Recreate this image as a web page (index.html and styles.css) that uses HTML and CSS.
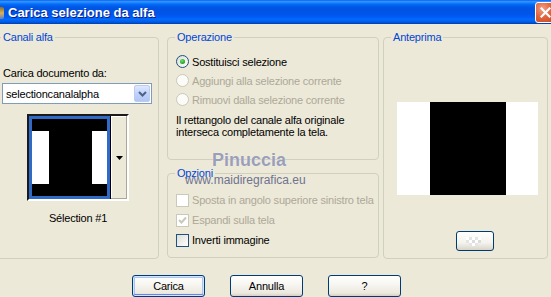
FILE: index.html
```html
<!DOCTYPE html>
<html lang="it">
<head>
<meta charset="utf-8">
<title>Carica selezione da alfa</title>
<link rel="stylesheet" href="styles.css">
</head>
<body>
<div class="window">
  <div class="titlebar">
    <span class="app-icon"></span>
    <span class="title">Carica selezione da alfa</span>
    <span class="close">
      <svg width="11" height="11" viewBox="0 0 11 11"><path d="M1.5 1.5 L9.5 9.5 M9.5 1.5 L1.5 9.5" stroke="#fff" stroke-width="2.2" stroke-linecap="square"/></svg>
    </span>
  </div>
  <div class="content">
    <div class="panels">
      <fieldset class="group group-channels">
        <legend>Canali alfa</legend>
        <div class="channels-body">
          <div class="field-label">Carica documento da:</div>
          <div class="combo">
            <span class="combo-text">selectioncanalalpha</span>
            <span class="combo-btn">
              <svg width="9" height="6" viewBox="0 0 9 6"><path d="M1 1 L4.5 4.5 L8 1" fill="none" stroke="#4d6185" stroke-width="2"/></svg>
            </span>
          </div>
          <div class="thumb-col">
            <div class="thumb-frame">
              <div class="thumb-sel">
                <div class="thumb-img">
                  <span class="t-white"></span><span class="t-black"></span><span class="t-white t-right"></span>
                </div>
              </div>
              <div class="thumb-btn">
                <svg width="7" height="4" viewBox="0 0 7 4"><path d="M0 0 H7 L3.5 4 Z" fill="#000"/></svg>
              </div>
            </div>
            <div class="thumb-caption">Sélection #1</div>
          </div>
        </div>
      </fieldset>

      <div class="middle">
        <fieldset class="group group-op">
          <legend>Operazione</legend>
          <div class="op-body">
            <div class="opt-row">
              <span class="radio checked"><span class="dot"></span></span>
              <span>Sostituisci selezione</span>
            </div>
            <div class="opt-row disabled">
              <span class="radio"></span>
              <span>Aggiungi alla selezione corrente</span>
            </div>
            <div class="opt-row disabled">
              <span class="radio"></span>
              <span>Rimuovi dalla selezione corrente</span>
            </div>
            <p class="note">Il rettangolo del canale alfa originale<br>interseca completamente la tela.</p>
          </div>
        </fieldset>
        <fieldset class="group group-opts">
          <legend>Opzioni</legend>
          <div class="opts-body">
            <div class="opt-row disabled">
              <span class="check"></span>
              <span>Sposta in angolo superiore sinistro tela</span>
            </div>
            <div class="opt-row disabled">
              <span class="check">
                <svg width="9" height="9" viewBox="0 0 9 9"><path d="M1 4 L3.5 6.5 L8 1.5" fill="none" stroke="#cac8bb" stroke-width="2"/></svg>
              </span>
              <span>Espandi sulla tela</span>
            </div>
            <div class="opt-row">
              <span class="check enabled"></span>
              <span>Inverti immagine</span>
            </div>
          </div>
        </fieldset>
      </div>

      <fieldset class="group group-preview">
        <legend>Anteprima</legend>
        <div class="preview-body">
          <div class="preview-img"><span class="p-black"></span></div>
          <div class="preview-btn">
            <svg width="18" height="9" viewBox="0 0 18 9">
              <rect x="0" y="0" width="3" height="3" fill="#fff"/>
              <rect x="3" y="0" width="3" height="3" fill="#e4e4e4"/>
              <rect x="6" y="0" width="3" height="3" fill="#fff"/>
              <rect x="9" y="0" width="3" height="3" fill="#e4e4e4"/>
              <rect x="12" y="0" width="3" height="3" fill="#fff"/>
              <rect x="0" y="3" width="3" height="3" fill="#e4e4e4"/>
              <rect x="3" y="3" width="3" height="3" fill="#fff"/>
              <rect x="6" y="3" width="3" height="3" fill="#dcdcdc"/>
              <rect x="9" y="3" width="3" height="3" fill="#fff"/>
              <rect x="12" y="3" width="3" height="3" fill="#dcdcdc"/>
              <rect x="3" y="6" width="3" height="3" fill="#e4e4e4"/>
              <rect x="6" y="6" width="3" height="3" fill="#fff"/>
              <rect x="9" y="6" width="3" height="3" fill="#e4e4e4"/>
            </svg>
          </div>
        </div>
      </fieldset>
    </div>

    <div class="buttons">
      <button class="btn default">Carica</button>
      <button class="btn">Annulla</button>
      <button class="btn">?</button>
    </div>
  </div>

  <div class="watermark">
    <div class="wm-name">Pinuccia</div>
    <div class="wm-url">www.maidiregrafica.eu</div>
  </div>
</div>
</body>
</html>
```

FILE: styles.css
```css
html, body {
  margin: 0;
  padding: 0;
}

body {
  width: 551px;
  height: 297px;
  overflow: hidden;
  background: #ece9d8;
  font-family: "Liberation Sans", Arial, sans-serif;
  font-size: 11px;
  letter-spacing: -0.2px;
  color: #000;
}

.window {
  position: relative;
  width: 551px;
  height: 297px;
  overflow: hidden;
  display: flex;
  flex-direction: column;
}

/* Title bar */
.titlebar {
  flex: none;
  height: 24px;
  display: flex;
  align-items: center;
  overflow: hidden;
  letter-spacing: 0;
  background: linear-gradient(to bottom,
    #0058ee 0%, #3593ff 5%, #288eff 9%, #127dff 13%, #036ffc 17%,
    #0262ee 22%, #0057e5 30%, #0054e3 40%, #0055eb 60%, #005bf5 70%,
    #026afe 80%, #0062ef 88%, #0052d6 94%, #003ea8 100%);
}

.app-icon {
  width: 4px;
  height: 12px;
  margin-top: 1px;
  background: linear-gradient(to bottom, #8a6a2a, #d7b25c 50%, #5b7fc9);
  border-radius: 0 2px 2px 0;
}

.title {
  flex: 1;
  margin-left: 4px;
  font-size: 13px;
  font-weight: bold;
  color: #fff;
  text-shadow: 1px 1px 0 #0a1f8c;
  white-space: nowrap;
}

.close {
  width: 21px;
  height: 21px;
  margin-right: -5px;
  box-sizing: border-box;
  border: 1px solid #fff;
  border-radius: 3px;
  background: radial-gradient(circle at 35% 30%, #f0a087 0%, #e2653d 45%, #c9451c 100%);
  display: flex;
  align-items: center;
  justify-content: center;
}

/* Content */
.content {
  display: flex;
  flex-direction: column;
  padding-top: 7px;
}

.panels {
  display: flex;
  align-items: flex-start;
}

.group {
  margin: 0;
  padding: 0;
  border: 1px solid #d0d0bf;
  border-radius: 4px;
  box-sizing: border-box;
  min-width: 0;
}

.group legend {
  margin-left: 7px;
  padding: 0 2px;
  color: #0046d5;
  line-height: 13px;
}

.group-channels {
  width: 166px;
  height: 228px;
  margin-left: -7px;
}

.middle {
  width: 212px;
  margin-left: 8px;
  display: flex;
  flex-direction: column;
  gap: 7px;
}

.group-op {
  height: 129px;
}

.group-opts {
  height: 91px;
}

.group-preview {
  width: 165px;
  height: 228px;
  margin-left: 4px;
}

/* Channels panel */
.channels-body {
  padding-left: 8px;
  display: flex;
  flex-direction: column;
}

.field-label {
  margin-top: 23px;
  padding-left: 1px;
  line-height: 13px;
}

.combo {
  margin-top: 3px;
  width: 150px;
  height: 21px;
  box-sizing: border-box;
  border: 1px solid #7f9db9;
  background: #fff;
  display: flex;
  align-items: center;
}

.combo-text {
  flex: 1;
  padding-left: 3px;
}

.combo-btn {
  width: 16px;
  height: 17px;
  margin-right: 1px;
  box-sizing: border-box;
  border: 1px solid #bccbf0;
  border-radius: 2px;
  background: linear-gradient(to bottom, #dfe8fd, #c1d3fb 50%, #b2c6f4);
  display: flex;
  align-items: center;
  justify-content: center;
}

.thumb-col {
  margin-left: 25px;
  margin-top: 10px;
  width: 102px;
  display: flex;
  flex-direction: column;
  align-items: center;
}

.thumb-frame {
  width: 102px;
  box-sizing: border-box;
  display: flex;
  border-top: 2px solid #1a1a1a;
  border-left: 2px solid #1a1a1a;
  border-right: 2px solid #fff;
  border-bottom: 2px solid #fff;
}

.thumb-sel {
  border: 3px solid #316ac5;
}

.thumb-img {
  width: 75px;
  height: 53px;
  border-top: 12px solid #000;
  border-bottom: 12px solid #000;
  display: flex;
}

.t-white {
  width: 17px;
  background: #fff;
}

.t-right {
  width: 15px;
}

.t-black {
  flex: 1;
  background: #000;
}

.thumb-btn {
  flex: 1;
  border-left: 1px solid #000;
  background: #ece9d8;
  box-shadow: inset -1px -1px 0 #aca899, inset 1px 1px 0 #fff;
  display: flex;
  align-items: center;
  justify-content: center;
}

.thumb-caption {
  margin-top: 11px;
  line-height: 13px;
}

/* Operazione / Opzioni */
.op-body {
  padding-left: 8px;
  padding-top: 8px;
}

.opts-body {
  padding-left: 8px;
  padding-top: 10px;
}

.opt-row {
  height: 19px;
  display: flex;
  align-items: center;
  gap: 3px;
  white-space: nowrap;
}

.opts-body .opt-row {
  height: 20px;
}

.opt-row.disabled {
  color: #aca899;
}

.radio {
  width: 13px;
  height: 13px;
  box-sizing: border-box;
  border-radius: 50%;
  border: 1px solid #cac8bb;
  background: #fbfbf8;
  display: flex;
  align-items: center;
  justify-content: center;
  flex: none;
}

.radio.checked {
  border-color: #1c5180;
  background: linear-gradient(135deg, #dcdcd7, #fff);
}

.dot {
  width: 5px;
  height: 5px;
  border-radius: 50%;
  background: radial-gradient(circle at 40% 35%, #6ee06e, #21a121 70%);
}

.note {
  margin: 5px 0 0;
  line-height: 12px;
}

.check {
  width: 13px;
  height: 13px;
  box-sizing: border-box;
  border: 1px solid #cac8bb;
  background: #fff;
  display: flex;
  align-items: center;
  justify-content: center;
  flex: none;
}

.check.enabled {
  border-color: #1c5180;
  background: linear-gradient(135deg, #dcdcd7, #fff);
}

/* Preview */
.preview-body {
  padding-left: 13px;
  padding-top: 58px;
  display: flex;
  flex-direction: column;
}

.preview-img {
  width: 141px;
  height: 93px;
  background: #fff;
  display: flex;
}

.p-black {
  width: 76px;
  margin-left: 33px;
  background: #000;
}

.preview-btn {
  margin-top: 36px;
  margin-left: 59px;
  width: 38px;
  height: 20px;
  box-sizing: border-box;
  border: 1px solid #003c74;
  border-radius: 3px;
  background: linear-gradient(to bottom, #fff, #f4f3ee 60%, #d8d4c8);
  display: flex;
  align-items: center;
  justify-content: center;
}

/* Buttons */
.buttons {
  margin-top: 16px;
  padding-left: 132px;
  display: flex;
  gap: 25px;
}

.btn {
  width: 73px;
  height: 22px;
  box-sizing: border-box;
  border: 1px solid #003c74;
  border-radius: 3px;
  background: linear-gradient(to bottom, #fff 0%, #f6f5f0 45%, #ece9de 85%, #d6d0c5 100%);
  font-family: "Liberation Sans", Arial, sans-serif;
  font-size: 11px;
  letter-spacing: -0.2px;
  color: #000;
  padding: 0;
}

.btn.default {
  box-shadow: inset 0 0 0 1px #cee7ff, inset 0 -1px 0 1px #6982ee, inset 0 0 0 2px #a9c4f5;
}

/* Watermark overlay */
.watermark {
  position: absolute;
  left: 0;
  top: 0;
  pointer-events: none;
  letter-spacing: 0;
}

.wm-name {
  position: absolute;
  left: 212px;
  top: 150px;
  font-size: 18px;
  line-height: 21px;
  font-weight: bold;
  color: #9a9fb8;
  text-shadow: 0 0 1px #fff;
  white-space: nowrap;
}

.wm-url {
  position: absolute;
  left: 185px;
  top: 173px;
  font-size: 12px;
  line-height: 14px;
  color: #6f7390;
  white-space: nowrap;
}
```
